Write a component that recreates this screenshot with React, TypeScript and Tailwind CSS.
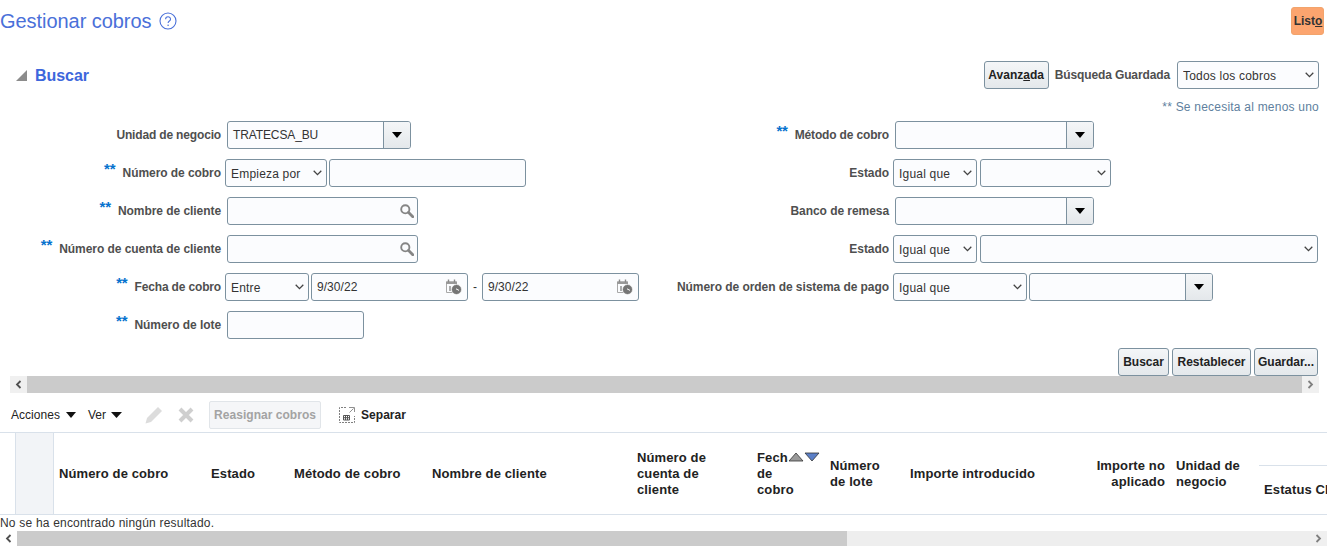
import type { ReactNode } from 'react';

const fieldBox = 'h-7 rounded-[3px] border border-[#7c919f] bg-[#fbfcfe]';
const raisedBtn =
  'h-7 rounded-[3px] border border-[#7c919f] bg-gradient-to-b from-[#f4f6f8] to-[#e4e8eb] text-xs font-bold text-[#222222]';

function Stars() {
  return <span className="relative -top-[3px] mr-[7px] text-[15px] leading-[0] font-bold text-[#0572ce]">**</span>;
}

function Row({ label, width, stars, tight, children }: { label: string; width: number; stars?: boolean; tight?: boolean; children: ReactNode }) {
  return (
    <div className="flex h-7 items-center">
      <div
        className={`whitespace-nowrap text-right text-xs font-bold text-[#4f4f4f] ${tight ? 'tracking-[-0.16px]' : 'tracking-[-0.06px]'}`}
        style={{ width }}
      >
        {stars && <Stars />}
        {label}
      </div>
      {children}
    </div>
  );
}

function Select({ value, className }: { value: string; className: string }) {
  return (
    <div className={`relative h-7 ${className}`}>
      <select
        defaultValue={value}
        className={`${fieldBox} w-full appearance-none pl-[5px] pt-px text-xs tracking-[0.2px] text-[#333333] outline-none`}
      >
        <option>{value}</option>
      </select>
      <svg className="pointer-events-none absolute right-[5px] top-[11px]" width="9" height="6" viewBox="0 0 9 6" fill="none">
        <path d="M.7.8l3.8 3.8L8.3.8" stroke="#444" strokeWidth="1.3" />
      </svg>
    </div>
  );
}

function Combo({ value, className }: { value?: string; className: string }) {
  return (
    <div className={`${fieldBox} flex overflow-hidden ${className}`}>
      <div className="flex-1 pl-[5px] text-xs leading-[26px] tracking-[-0.12px] text-[#333333]">{value}</div>
      <div className="flex w-[27px] items-center justify-center border-l border-[#7c919f] bg-gradient-to-b from-[#f4f6f8] to-[#e4e8eb]">
        <svg width="10" height="6" viewBox="0 0 10 6"><path d="M0 0h10L5 6z" fill="#000" /></svg>
      </div>
    </div>
  );
}

function SearchIcon() {
  return (
    <svg width="14" height="14" viewBox="0 0 14 14" fill="none">
      <circle cx="5.3" cy="5.3" r="4.1" stroke="#858585" strokeWidth="1.9" />
      <path d="M8.6 8.6l4.2 4.2" stroke="#858585" strokeWidth="2.8" strokeLinecap="round" />
    </svg>
  );
}

function LookupInput({ className }: { className: string }) {
  return (
    <div className={`${fieldBox} flex items-center justify-end pr-[3px] ${className}`}>
      <SearchIcon />
    </div>
  );
}

function DateInput({ value }: { value: string }) {
  return (
    <div className={`${fieldBox} flex w-[157px] items-center justify-between pl-[5px] pr-[5px] text-xs text-[#333333]`}>
      <span className="tracking-[0.05px]">{value}</span>
      <svg width="17" height="16" viewBox="0 0 17 16" fill="none">
        <path d="M1.5 3h10v10.5h-10z" stroke="#a8a8a8" strokeWidth="1" />
        <path d="M1 2.5h11v2.5H1z" fill="#9a9a9a" />
        <path d="M3.5.5v3M9.5.5v3" stroke="#8a8a8a" strokeWidth="1.4" />
        <path d="M5 7v5" stroke="#777" strokeWidth="1.2" />
        <circle cx="11.5" cy="10.5" r="5" fill="#757575" stroke="#fff" strokeWidth=".6" />
        <path d="M11 9.8l3 1.6" stroke="#fff" strokeWidth="1" />
      </svg>
    </div>
  );
}

function ScrollArrow({ dir, className }: { dir: 'left' | 'right'; className: string }) {
  return (
    <div className={`flex items-center justify-center bg-[#f0f0f0] ${className}`}>
      <svg width="7" height="9" viewBox="0 0 7 9" fill="none">
        <path d={dir === 'left' ? 'M5.5 1L2 4.5 5.5 8' : 'M1.5 1L5 4.5 1.5 8'} stroke={dir === 'left' ? '#505050' : '#808080'} strokeWidth="1.8" />
      </svg>
    </div>
  );
}

function Head({ width, className, children }: { width: number; className?: string; children: ReactNode }) {
  return (
    <div className={`shrink-0 text-[13px] leading-4 font-bold tracking-[0.12px] text-[#222222] ${className ?? ''}`} style={{ width }}>
      {children}
    </div>
  );
}

export default function App() {
  return (
    <div className="flex h-[546px] w-[1327px] flex-col overflow-hidden bg-white font-['Liberation_Sans',Arial,sans-serif]">
      {/* titulo */}
      <div className="mt-[7px] flex h-7 items-center justify-between pr-[3px]">
        <div className="flex items-center gap-[7px]">
          <h1 className="text-xl tracking-[-0.05px] text-[#4a70d9]">Gestionar cobros</h1>
          <svg width="18" height="18" viewBox="0 0 18 18" fill="none">
            <circle cx="9" cy="9" r="8" stroke="#4a70d9" strokeWidth="1.1" />
            <path d="M6.6 7.2c0-3.2 4.9-3.2 4.9 0 0 1.9-2.4 1.7-2.4 3.8" stroke="#4a70d9" strokeWidth="1.1" />
            <circle cx="9.1" cy="13.2" r=".8" fill="#4a70d9" />
          </svg>
        </div>
        <button className="h-7 w-[33px] rounded-[3px] border border-[#f2a46c] bg-[#fca56f] pl-px text-xs font-bold text-[#333333]">
          List<span className="underline">o</span>
        </button>
      </div>

      {/* buscar */}
      <div className="mt-[26px] flex h-7 items-center pl-[16px] pr-2">
        <svg width="11" height="11" viewBox="0 0 11 11"><path d="M11 0v11H0z" fill="#8c8c8c" /></svg>
        <h2 className="ml-2 pt-0.5 text-base font-bold tracking-[-0.05px] text-[#3d67dc]">Buscar</h2>
        <button className={`${raisedBtn} ml-auto w-[65px]`}>
          Avanz<span className="underline">a</span>da
        </button>
        <span className="ml-1.5 text-xs font-bold tracking-[-0.12px] text-[#4f4f4f]">Búsqueda Guardada</span>
        <Select value="Todos los cobros" className="ml-[7px] w-[142px]" />
      </div>
      <div className="mt-[11px] h-[14px] pr-2 text-right text-xs leading-[14px] tracking-[0.22px] text-[#607f9e]">** Se necesita al menos uno</div>

      {/* formulario */}
      <div className="mt-[7px] grid grid-cols-[660px_1fr]">
        <div className="flex flex-col gap-2.5">
          <Row label="Unidad de negocio" width={221} tight>
            <Combo value="TRATECSA_BU" className="ml-1.5 w-[184px]" />
          </Row>
          <Row label="Número de cobro" width={221} stars>
            <Select value="Empieza por" className="ml-1 w-[102px]" />
            <div className={`${fieldBox} ml-0.5 w-[197px]`} />
          </Row>
          <Row label="Nombre de cliente" width={221} stars>
            <LookupInput className="ml-1.5 w-[191px]" />
          </Row>
          <Row label="Número de cuenta de cliente" width={221} stars>
            <LookupInput className="ml-1.5 w-[191px]" />
          </Row>
          <Row label="Fecha de cobro" width={221} stars tight>
            <Select value="Entre" className="ml-1 w-[84px]" />
            <div className="ml-0.5">
              <DateInput value="9/30/22" />
            </div>
            <span className="w-[14px] text-center text-xs text-[#333333]">-</span>
            <DateInput value="9/30/22" />
          </Row>
          <Row label="Número de lote" width={221} stars>
            <div className={`${fieldBox} ml-1.5 w-[137px]`} />
          </Row>
        </div>
        <div className="flex flex-col gap-2.5">
          <Row label="Método de cobro" width={229} stars tight>
            <Combo className="ml-1.5 w-[199px]" />
          </Row>
          <Row label="Estado" width={229}>
            <Select value="Igual que" className="ml-1 w-[84px]" />
            <Select value="" className="ml-[3px] w-[131px]" />
          </Row>
          <Row label="Banco de remesa" width={229}>
            <Combo className="ml-1.5 w-[199px]" />
          </Row>
          <Row label="Estado" width={229}>
            <Select value="Igual que" className="ml-1 w-[84px]" />
            <Select value="" className="ml-[3px] w-[338px]" />
          </Row>
          <Row label="Número de orden de sistema de pago" width={229}>
            <Select value="Igual que" className="ml-1 w-[134px]" />
            <Combo className="ml-0.5 w-[184px]" />
          </Row>
        </div>
      </div>

      <div className="mt-[9px] flex justify-end gap-[3px] pr-[9px]">
        <button className={`${raisedBtn} w-[51px]`}>Buscar</button>
        <button className={`${raisedBtn} w-[79px]`}>Restablecer</button>
        <button className={`${raisedBtn} w-[64px]`}>Guardar...</button>
      </div>
      <div className="ml-2.5 flex h-[17px] w-[1309px]">
        <ScrollArrow dir="left" className="w-[17px]" />
        <div className="flex-1 bg-[#cbcbcb]" />
        <ScrollArrow dir="right" className="w-[17px]" />
      </div>

      {/* barra de herramientas */}
      <div className="mt-2 flex h-7 items-center pl-[11px] text-xs tracking-[0.03px] text-[#222222]">
        <span>Acciones</span>
        <svg className="ml-[6px]" width="10" height="6" viewBox="0 0 10 6"><path d="M0 0h10L5 6z" fill="#111" /></svg>
        <span className="ml-[12px]">Ver</span>
        <svg className="ml-[5px]" width="11" height="6" viewBox="0 0 11 6"><path d="M0 0h11L5.5 6z" fill="#111" /></svg>
        <svg className="ml-[23px]" width="18" height="18" viewBox="0 0 18 18">
          <path d="M13 1l4 4L6 16l-5.5 1.5L2 12z" fill="#dcdcdc" />
        </svg>
        <svg className="ml-[15px]" width="16" height="16" viewBox="0 0 16 16">
          <path d="M2 2l12 12M14 2L2 14" stroke="#cfcfcf" strokeWidth="4" />
        </svg>
        <button className="ml-[15px] h-7 w-[112px] rounded-[2px] border border-[#e1e5e9] bg-[#f5f6f8] text-xs font-bold text-[#a3a3a3]">
          Reasignar cobros
        </button>
        <svg className="ml-[18px]" width="16" height="16" viewBox="0 0 16 16" fill="none">
          <path d="M7 .5H.5v15h15V9" stroke="#808080" strokeDasharray="2 1" />
          <path d="M10 .5h5.5V5" stroke="#909090" />
          <path d="M14.5 1.5L10.5 5.5" stroke="#909090" />
          <path d="M4.5 8.5h6v4.5h-6zM6.5 8.5V13M8.5 8.5V13M4.5 10.7h6" stroke="#555" />
        </svg>
        <span className="ml-[6px] font-bold">Separar</span>
      </div>

      {/* tabla */}
      <div className="mt-[3px] flex h-[83px] border-y border-[#d9e1ea]">
        <div className="w-[15px] shrink-0" />
        <div className="mr-[5px] w-[39px] shrink-0 border-x border-[#d9e1ea] bg-[#f2f4f7]" />
        <div className="relative flex flex-1 items-center">
          <Head width={152}>Número de cobro</Head>
          <Head width={83}>Estado</Head>
          <Head width={138}>Método de cobro</Head>
          <Head width={205}>Nombre de cliente</Head>
          <Head width={120}>
            Número de
            <br />
            cuenta de
            <br />
            cliente
          </Head>
          <Head width={73}>
            <span className="relative block">
              Fecha
              <svg className="absolute left-[31px] top-0 bg-white" width="32" height="13" viewBox="0 0 32 13">
                <path d="M1 11L8 3l7 8z" fill="#9a9a9a" stroke="#333" strokeWidth=".8" />
                <path d="M17 3h14l-7 8z" fill="#5b7fc7" stroke="#333" strokeWidth=".8" />
              </svg>
            </span>
            de
            <br />
            cobro
          </Head>
          <Head width={80}>
            Número
            <br />
            de lote
          </Head>
          <Head width={170}>Importe introducido</Head>
          <Head width={85} className="text-right">
            Importe no
            <br />
            aplicado
          </Head>
          <Head width={83} className="ml-[11px]">
            Unidad de
            <br />
            negocio
          </Head>
          <div className="flex-1 self-stretch">
            <div className="mt-[32px] h-px bg-[#d9e1ea]" />
            <div className="mt-[16px] whitespace-nowrap pl-[5px] text-[13px] leading-4 font-bold tracking-[0.12px] text-[#222222]">Estatus CP</div>
          </div>
        </div>
      </div>
      <div className="h-[16px] whitespace-nowrap text-xs leading-4 tracking-[0.2px] text-[#333333]">No se ha encontrado ningún resultado.</div>
      <div className="flex h-[15px] w-full">
        <ScrollArrow dir="left" className="w-[17px] bg-white" />
        <div className="w-[830px] bg-[#cbcbcb]" />
        <div className="flex-1 bg-[#eeeeee]" />
        <ScrollArrow dir="right" className="w-[17px] bg-[#eeeeee]" />
      </div>
    </div>
  );
}
